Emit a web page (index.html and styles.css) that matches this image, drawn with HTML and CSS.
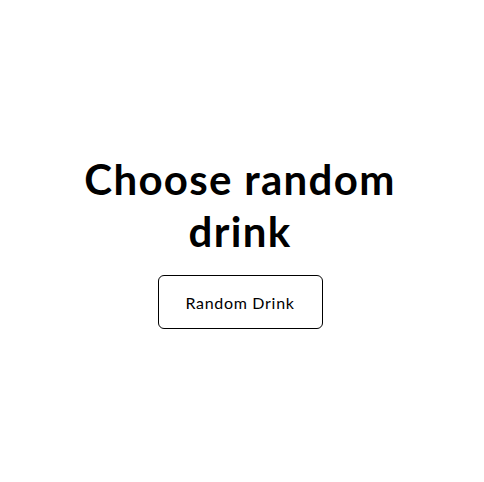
FILE: index.html
```html
<!DOCTYPE html>
<html lang="en">
<head>
<meta charset="utf-8">
<title>Random Drink</title>
<link rel="stylesheet" href="styles.css">
</head>
<body>
<main class="page">
  <h1 class="title">Choose random drink</h1>
  <button class="btn" type="button">Random Drink</button>
</main>
</body>
</html>
```
FILE: styles.css
```css
html, body {
  margin: 0;
  padding: 0;
  background: #ffffff;
}
body {
  font-family: "Lato", "Noto Sans", sans-serif;
  color: #000;
}
.page {
  min-height: 482px;
  display: flex;
  flex-direction: column;
  align-items: center;
  justify-content: center;
  box-sizing: border-box;
  padding: 0 4px 0 0;
}
.title {
  margin: 0 0 18px;
  max-width: 360px;
  text-align: center;
  font-size: 42px;
  line-height: 52px;
  font-weight: 700;
  letter-spacing: 1.3px;
}
.btn {
  width: 165px;
  height: 54px;
  padding: 0;
  background: #fff;
  border: 1px solid #000;
  border-radius: 6px;
  font-family: "Lato", "Noto Sans", sans-serif;
  font-size: 16px;
  letter-spacing: 0.7px;
  color: #000;
  cursor: pointer;
}
```
